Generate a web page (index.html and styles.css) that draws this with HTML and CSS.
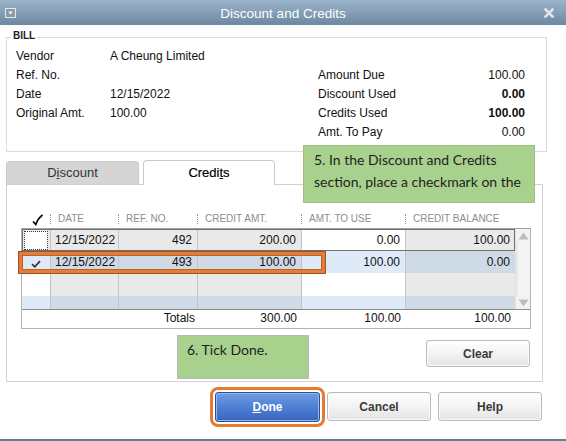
FILE: index.html
```html
<!DOCTYPE html>
<html>
<head>
<meta charset="utf-8">
<link rel="stylesheet" href="styles.css">
</head>
<body>
<div class="win">
  <div class="titlebar">
    <span class="sysicon"><svg width="11" height="10" viewBox="0 0 11 10"><rect x="0.5" y="0.5" width="10" height="9" fill="#8c9aa6" stroke="#e2e8ee"/><path d="M3 3.5 L8 3.5 L5.5 6.5 Z" fill="#e9eef2"/></svg></span>
    <span class="title">Discount and Credits</span>
    <span class="close"><svg width="10" height="10" viewBox="0 0 10 10"><path d="M1.5 1.5 L8.5 8.5 M8.5 1.5 L1.5 8.5" stroke="#dde4ea" stroke-width="2.6" stroke-linecap="square"/></svg></span>
  </div>

  <div class="bill">
    <span class="legend">BILL</span>
    <div class="bill-left">
      <span>Vendor</span><span>A Cheung Limited</span>
      <span>Ref. No.</span><span></span>
      <span>Date</span><span>12/15/2022</span>
      <span>Original Amt.</span><span>100.00</span>
    </div>
    <div class="bill-right">
      <span>Amount Due</span><span class="num">100.00</span>
      <span>Discount Used</span><span class="num bold">0.00</span>
      <span>Credits Used</span><span class="num bold">100.00</span>
      <span>Amt. To Pay</span><span class="num">0.00</span>
    </div>
  </div>

  <div class="tabs">
    <div class="tab tab-off">D<u>i</u>scount</div>
    <div class="tab tab-on">Credi<u>t</u>s</div>
  </div>

  <div class="panel">
    <div class="thead">
      <div class="th th-check"><svg width="11" height="12" viewBox="0 0 11 12"><path d="M1 7.5 L3.8 10.5 C5 7 7 3.5 10.5 0.8" fill="none" stroke="#000" stroke-width="1.6"/></svg></div>
      <div class="th">DATE</div>
      <div class="th">REF. NO.</div>
      <div class="th">CREDIT AMT.</div>
      <div class="th">AMT. TO USE</div>
      <div class="th">CREDIT BALANCE</div>
    </div>
    <div class="grid-wrap">
      <div class="grid">
        <div class="c g chk"><span class="cbox"></span></div>
        <div class="c g">12/15/2022</div>
        <div class="c g r">492</div>
        <div class="c g r">200.00</div>
        <div class="c w r">0.00</div>
        <div class="c g r last">100.00</div>
        <div class="scroll">
          <div class="arr"><svg width="11" height="8" viewBox="0 0 11 8"><path d="M0.5 7.5 L5.5 0.5 L10.5 7.5 Z" fill="#bdbdbd"/></svg></div>
          <div class="track"></div>
          <div class="arr"><svg width="11" height="8" viewBox="0 0 11 8"><path d="M0.5 0.5 L5.5 7.5 L10.5 0.5 Z" fill="#bdbdbd"/></svg></div>
        </div>

        <div class="c lb chk"><svg width="10" height="8" viewBox="0 0 10 8"><path d="M1 4.2 L3.8 6.8 L9 1.2" fill="none" stroke="#333" stroke-width="1.7"/></svg></div>
        <div class="c db">12/15/2022</div>
        <div class="c db r">493</div>
        <div class="c db r">100.00</div>
        <div class="c lb r">100.00</div>
        <div class="c db r last">0.00</div>

        <div class="c w"></div>
        <div class="c g"></div>
        <div class="c g"></div>
        <div class="c g"></div>
        <div class="c w"></div>
        <div class="c g last"></div>

        <div class="c lb"></div>
        <div class="c db"></div>
        <div class="c db"></div>
        <div class="c db"></div>
        <div class="c lb"></div>
        <div class="c db last"></div>

        <div class="tot tot-label">Totals</div>
        <div class="tot r">300.00</div>
        <div class="tot r">100.00</div>
        <div class="tot r tot-last">100.00</div>
      </div>
      <div class="focus-row"></div>
      <div class="hl-row"></div>
    </div>
    <div class="panel-foot">
      <button class="btn btn-clear">Clear</button>
    </div>
    <div class="note note2">6. Tick Done.</div>
  </div>

  <div class="buttons">
    <button class="btn btn-done"><u>D</u>one</button>
    <button class="btn">Cancel</button>
    <button class="btn">Help</button>
  </div>

  <div class="bottomline"></div>

  <div class="note note1">5. In the Discount and Credits section, place a checkmark on the</div>
</div>
</body>
</html>
```

FILE: styles.css
```css
* { box-sizing: border-box; }
html, body { margin: 0; padding: 0; }
body { width: 566px; height: 441px; background: #fff; overflow: hidden; }

.win {
  position: relative;
  width: 566px;
  height: 441px;
  display: flex;
  flex-direction: column;
  font-family: "Liberation Sans", Arial, sans-serif;
  font-size: 12px;
  color: #111;
  background: #fff;
}

.titlebar {
  height: 25px;
  flex: none;
  display: flex;
  align-items: center;
  background: linear-gradient(#9cb4ca, #7f9ab2 60%, #6c879f);
  position: relative;
}
.sysicon { position: absolute; left: 5px; top: 8px; display: flex; }
.title {
  flex: 1;
  text-align: center;
  color: #fff;
  font-size: 13.5px;
  padding-top: 1px;
}
.close { position: absolute; right: 12px; top: 8px; display: flex; }

.bill {
  position: relative;
  margin: 12px 19px 0 6px;
  height: 115px;
  border: 1px solid #dcdcdc;
  display: flex;
  flex: none;
  padding: 9px 0 0 9px;
}
.legend {
  position: absolute;
  left: 4px;
  top: -8px;
  background: #fff;
  padding: 0 2px;
  font-size: 10px;
  font-weight: bold;
  color: #222;
  line-height: 12px;
}
.bill-left {
  width: 302px;
  display: grid;
  grid-template-columns: 94px 1fr;
  grid-auto-rows: 19px;
  align-content: start;
  line-height: 19px;
}
.bill-right {
  width: 207px;
  margin-top: 19px;
  display: grid;
  grid-template-columns: 1fr auto;
  grid-auto-rows: 19px;
  align-content: start;
  line-height: 19px;
}
.num { text-align: right; }
.bold { font-weight: bold; }

.tabs {
  flex: none;
  display: flex;
  align-items: flex-end;
  gap: 4px;
  margin: 8px 0 0 6px;
  height: 24px;
  position: relative;
  z-index: 2;
}
.tab {
  width: 133px;
  text-align: center;
  font-size: 13px;
  border: 1px solid #c9c9c9;
  border-bottom: none;
  border-radius: 4px 4px 0 0;
}
.tab-off {
  height: 23px;
  line-height: 22px;
  background: #d5d5d5;
  color: #333;
}
.tab-on {
  height: 25px;
  line-height: 23px;
  margin-bottom: -1px;
  background: #fff;
  color: #000;
  width: 132px;
  -webkit-text-stroke: 0.2px #000;
}

.panel {
  flex: none;
  position: relative;
  margin: 0 23px 0 6px;
  height: 198px;
  border: 1px solid #d2d2d2;
  padding: 0 0 0 14px;
}

.thead {
  margin-top: 28px;
  height: 12px;
  display: grid;
  grid-template-columns: 30px 68px 79px 104px 104px 109px;
  font-size: 10px;
  color: #8d8d8d;
  line-height: 12px;
}
.th {
  position: relative;
  padding-left: 7px;
  white-space: nowrap;
}
.th::before {
  content: "";
  position: absolute;
  left: -1px;
  top: 1px;
  height: 10px;
  border-left: 1px dotted #9a9a9a;
}
.th-check { padding-left: 11px; padding-top: 0; }
.th-check::before { display: none; }
.th-check svg { display: block; margin-top: 1px; }

.grid-wrap {
  position: relative;
  margin-top: 3px;
  width: 510px;
  border: 1px solid #b3b3b3;
  border-top-color: #a0a0a0;
}
.grid {
  display: grid;
  grid-template-columns: 29px 68px 79px 104px 104px 109px 15px;
  grid-template-rows: 22px 22px 23px 13px 19px;
}
.c {
  border-right: 1px solid #c4c4c4;
  line-height: 22px;
  padding: 0 4px;
  white-space: nowrap;
  overflow: hidden;
}
.c.last { border-right: none; }
.r { text-align: right; padding-right: 5px; }
.g { background: #e9e9e9; }
.w { background: #fff; }
.lb { background: #dfeaf9; }
.db { background: #cfdae7; }
.chk { display: flex; align-items: center; justify-content: center; padding: 0; }
.cbox {
  width: 24px;
  height: 19px;
  border: 1px dotted #333;
  background: #fff;
}
.chk svg { margin-top: 3px; }

.scroll {
  grid-column: 7;
  grid-row: 1 / 5;
  background: #f0f0f0;
  display: flex;
  flex-direction: column;
  border-left: 1px solid #e2e2e2;
}
.arr { height: 13px; display: flex; align-items: center; justify-content: center; background: #f2f2f2; }
.track { flex: 1; background: #f4f4f4; border-left: 2px solid #e8e8e8; }

.tot {
  border-top: 1px solid #8c8c8c;
  background: #fff;
  line-height: 17px;
  padding-right: 5px;
}
.tot-label { grid-column: 1 / 4; text-align: right; padding-right: 3px; }
.tot-last { grid-column: 6 / 8; padding-right: 19px; }

.focus-row {
  position: absolute;
  left: 0;
  top: 0;
  width: 493px;
  height: 22px;
  border: 1px solid #707070;
  pointer-events: none;
}
.hl-row {
  position: absolute;
  left: -3px;
  top: 23px;
  width: 306px;
  height: 21px;
  border: 3px solid #e87b35;
  box-shadow: 0 0 0 1px #9a5426, inset 0 0 0 1px #b9622a;
  pointer-events: none;
}

.panel-foot {
  display: flex;
  justify-content: flex-end;
  margin-top: 11px;
  padding-right: 12px;
}

.btn {
  font-family: "Liberation Sans", Arial, sans-serif;
  font-size: 12px;
  font-weight: bold;
  color: #3a3a3a;
  height: 29px;
  width: 104px;
  border: 1px solid #bcbcbc;
  border-radius: 3px;
  background: linear-gradient(#ffffff, #f3f3f3 50%, #e4e4e4);
  box-shadow: inset 0 0 0 1px #fafafa;
  padding: 0;
}
.btn-clear { height: 27px; }

.buttons {
  flex: none;
  display: flex;
  justify-content: flex-end;
  gap: 7px;
  margin-top: 10px;
  padding-right: 24px;
}
.btn-done {
  width: 105px;
  height: 30px;
  color: #fff;
  border: 1px solid #2c4f8f;
  background: linear-gradient(#6d9ce2, #4f80d4 50%, #3864c0);
  box-shadow: inset 0 0 0 1px #9ab8e6;
  outline: 3px solid #e8792f;
  outline-offset: 2px;
  margin-right: 0;
}

.bottomline {
  margin-top: auto;
  height: 2px;
  background: #5f7c98;
  flex: none;
}

.note {
  position: absolute;
  background: #a9d18e;
  border: 1px solid #9dbf86;
  color: #1e1e1e;
  font-family: Lato, "Open Sans", sans-serif;
  font-size: 14px;
  line-height: 22px;
}
.note1 {
  left: 303px;
  top: 145px;
  width: 232px;
  height: 58px;
  padding: 3px 8px 0 10px;
  z-index: 5;
}
.note2 {
  left: 170px;
  top: 150px;
  width: 132px;
  height: 44px;
  padding: 3px 9px;
  border-color: #b8b8b8;
}
```
